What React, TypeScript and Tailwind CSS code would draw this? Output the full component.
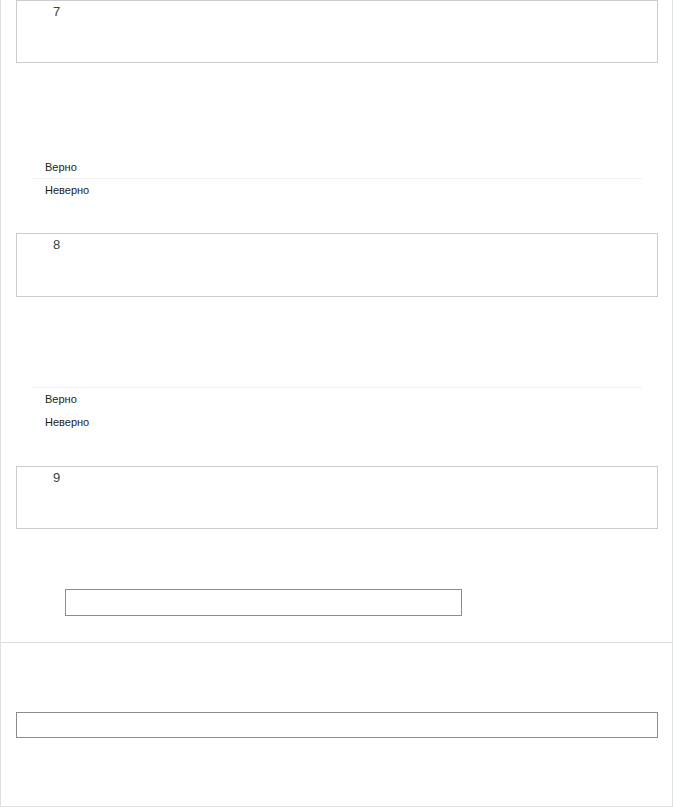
const ANSWERS = ["Верно", "Неверно"];

function QuestionBox({ n, tall }: { n: number; tall?: boolean }) {
  return (
    <div className={`${tall ? "h-[64px]" : "h-[63px]"} border border-[#cccccc] pl-[36px] pt-[3px]`}>
      <div className="text-[13px] leading-[16px] text-[#36424c]">{n}</div>
    </div>
  );
}

function Answers({ lineOnTop }: { lineOnTop?: boolean }) {
  return (
    <div className={`mx-[16px] ${lineOnTop ? "border-t border-[#f2f2f2]" : ""}`}>
      {ANSWERS.map((a, i) => (
        <div
          key={a}
          className={`h-[22px] flex items-center pl-[13px] text-[11px] leading-[13px] text-[#222] ${
            !lineOnTop && i === 0 ? "border-b border-[#f2f2f2] h-[23px]" : ""
          } ${lineOnTop && i === 0 ? "mb-px" : ""}`}
        >
          {a}
        </div>
      ))}
    </div>
  );
}

export default function App() {
  return (
    <div
      className="w-[673px] h-[807px] bg-white border-x border-b border-[#dce1e3] flex flex-col"
      style={{ fontFamily: '"Liberation Sans", Arial, sans-serif' }}
    >
      <section className="h-[643px] border-b border-[#dcdcdc] pl-[15px] pr-[14px]">
        <QuestionBox n={7} />
        <div className="h-[93px]" />
        <Answers />
        <div className="h-[32px]" />
        <QuestionBox n={8} tall />
        <div className="h-[90px]" />
        <Answers lineOnTop />
        <div className="h-[33px]" />
        <QuestionBox n={9} />
        <div className="h-[60px]" />
        <div className="ml-[49px] w-[397px] h-[27px] border border-[#8c8c8c]" />
      </section>
      <section className="pl-[15px] pr-[14px] pt-[69px]">
        <div className="h-[26px] border border-[#8c8c8c]" />
      </section>
    </div>
  );
}
